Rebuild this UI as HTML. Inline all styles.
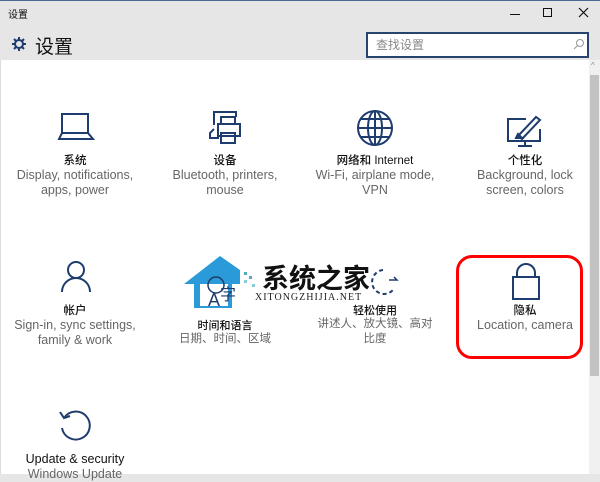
<!DOCTYPE html>
<html><head><meta charset="utf-8"><style>
*{margin:0;padding:0;box-sizing:border-box}
body{width:600px;height:474px;overflow:hidden;background:#e6e6e6;font-family:"Liberation Sans","Noto Sans CJK SC",sans-serif;position:relative}
.a{position:absolute}
.t{position:absolute;width:150px;text-align:center}
.l{font-size:11.5px;color:#111;font-weight:500}
.d{font-size:12.5px;color:#666;line-height:15px}
svg{position:absolute;overflow:visible}
</style></head><body>
<div class="a" style="left:0;top:0;width:600px;height:1px;background:#4a6a9a"></div>
<div class="a" style="left:8px;top:6px;font-size:10px;color:#111">设置</div>
<div class="a" style="left:510px;top:14px;width:10px;height:1px;background:#111"></div>
<div class="a" style="left:543px;top:8px;width:9px;height:9px;border:1px solid #111"></div>
<svg style="left:579px;top:8px" width="10" height="10"><path d="M0 0L9 9M9 0L0 9" stroke="#111" stroke-width="1.2"/></svg>
<svg style="left:11px;top:36px" width="16" height="16" viewBox="0 0 16 16"><g fill="none" stroke="#1e3c6e" stroke-width="2"><circle cx="8" cy="8" r="4"/><path d="M8 1v3M8 12v3M1 8h3M12 8h3M3 3l2 2M11 11l2 2M13 3l-2 2M5 11l-2 2"/></g></svg>
<div class="a" style="left:35px;top:32px;font-size:19px;color:#111">设置</div>
<div class="a" style="left:366px;top:32px;width:223px;height:26px;border:2px solid #2a4470;background:#fff"></div>
<div class="a" style="left:376px;top:36px;font-size:12px;color:#888">查找设置</div>
<svg style="left:573px;top:38px" width="12" height="12"><circle cx="7" cy="5" r="3.5" fill="none" stroke="#999"/><path d="M4.5 7.5L1 11" stroke="#999"/></svg>
<div class="a" style="left:0;top:60px;width:600px;height:414px;background:#fff;border-left:1px solid #ddd"></div>
<div class="a" style="left:589px;top:60px;width:11px;height:414px;background:#f0f0f0"></div>
<div class="a" style="left:590px;top:75px;width:9px;height:301px;background:#c2c2c2"></div>
<div class="a" style="left:591px;top:61px;font-size:8px;color:#888">^</div>

<svg style="left:58px;top:113px" width="36" height="28"><g fill="none" stroke="#1e3c6e" stroke-width="2"><rect x="4" y="1" width="26" height="19"/><path d="M4 20L1 26H35L30 20"/></g></svg>
<svg style="left:207px;top:111px" width="40" height="34"><g fill="none" stroke="#1e3c6e" stroke-width="2"><path d="M7 14V1H29V6"/><path d="M7 18L3 22V27H12"/><rect x="14" y="6" width="14" height="7"/><rect x="11" y="13" width="22" height="12"/><rect x="14" y="22" width="14" height="10"/></g></svg>
<svg style="left:356px;top:109px" width="38" height="38"><g fill="none" stroke="#1e3c6e" stroke-width="2"><circle cx="19" cy="19" r="17"/><ellipse cx="19" cy="19" rx="7" ry="17"/><path d="M2 19H36M5 10H33M5 28H33M19 2V36"/></g></svg>
<svg style="left:506px;top:114px" width="40" height="34"><g fill="none" stroke="#1e3c6e" stroke-width="2"><path d="M20 5H2V27H34V15"/><path d="M12 32H26M19 27V32"/><path d="M12 22L30 3L34 6L16 25Z"/><path d="M10 24l2-4 4 4z"/></g></svg>
<div class="t l" style="left:0;top:152px">系统</div>
<div class="t d" style="left:0;top:168px">Display, notifications,<br>apps, power</div>
<div class="t l" style="left:150px;top:152px">设备</div>
<div class="t d" style="left:150px;top:168px">Bluetooth, printers,<br>mouse</div>
<div class="t l" style="left:300px;top:152px">网络和 Internet</div>
<div class="t d" style="left:300px;top:168px">Wi-Fi, airplane mode,<br>VPN</div>
<div class="t l" style="left:450px;top:152px">个性化</div>
<div class="t d" style="left:450px;top:168px">Background, lock<br>screen, colors</div>

<svg style="left:60px;top:260px" width="32" height="32"><g fill="none" stroke="#1e3c6e" stroke-width="2"><circle cx="16" cy="10" r="8"/><path d="M2 32A14 14 0 0 1 30 32"/></g></svg>
<svg style="left:512px;top:264px" width="28" height="36"><g fill="none" stroke="#1e3c6e" stroke-width="2"><path d="M5 13V9A9 9 0 0 1 23 9V13"/><rect x="1" y="13" width="26" height="22"/></g></svg>
<div class="t l" style="left:0;top:302px">帐户</div>
<div class="t d" style="left:0;top:318px">Sign-in, sync settings,<br>family &amp; work</div>
<div class="t l" style="left:150px;top:317px;font-size:11px">时间和语言</div>
<div class="t d" style="left:150px;top:332px;font-size:11.5px">日期、时间、区域</div>
<div class="t l" style="left:300px;top:302px;font-size:11px">轻松使用</div>
<div class="t d" style="left:300px;top:317px;font-size:11.5px">讲述人、放大镜、高对<br>比度</div>
<div class="t l" style="left:450px;top:302px">隐私</div>
<div class="t d" style="left:450px;top:318px">Location, camera</div>
<div class="a" style="left:456px;top:255px;width:127px;height:104px;border:3px solid #f00;border-radius:16px"></div>

<svg style="left:182px;top:254px" width="100" height="56"><path d="M2 30L38 2L58 16V30H50V54H12V30Z" fill="#2a9ad8"/><path d="M18 30H46V52H18Z" fill="#fff"/><circle cx="34" cy="31" r="8" fill="none" stroke="#1e3c6e" stroke-width="1.5"/><text x="26" y="52" font-size="18" fill="#1e3c6e" font-family="Liberation Sans">A</text><text x="38" y="46" font-size="16" fill="#1e3c6e" font-family="Noto Sans CJK SC">字</text><rect x="62" y="18" width="3" height="3" fill="#5ab"/><rect x="67" y="22" width="3" height="3" fill="#5ab"/><rect x="62" y="26" width="3" height="3" fill="#8cd"/><rect x="70" y="30" width="3" height="3" fill="#8cd"/></svg>
<div class="a" style="left:262px;top:262px;font-size:27px;font-weight:bold;color:#111;font-family:'Noto Sans CJK SC',sans-serif;line-height:30px">系统之家</div>
<div class="a" style="left:255px;top:292px;font-size:10px;color:#222;font-family:'Liberation Serif',serif;letter-spacing:1px">XITONGZHIJIA.NET</div>
<svg style="left:373px;top:268px" width="26" height="30"><path d="M10 2A12 12 0 1 0 20 22" fill="none" stroke="#1e3c6e" stroke-width="2" stroke-dasharray="4 3"/><path d="M16 12h8l-3-3" fill="none" stroke="#1e3c6e" stroke-width="1.5"/></svg>

<svg style="left:58px;top:408px" width="34" height="34"><g fill="none" stroke="#1e3c6e" stroke-width="2"><path d="M6 10A14 14 0 1 1 4 20"/><path d="M2 4L6 10L12 8"/></g></svg>
<div class="t l" style="left:0;top:452px;font-size:12.5px">Update &amp; security</div>
<div class="t d" style="left:0;top:467px">Windows Update</div>
</body></html>
